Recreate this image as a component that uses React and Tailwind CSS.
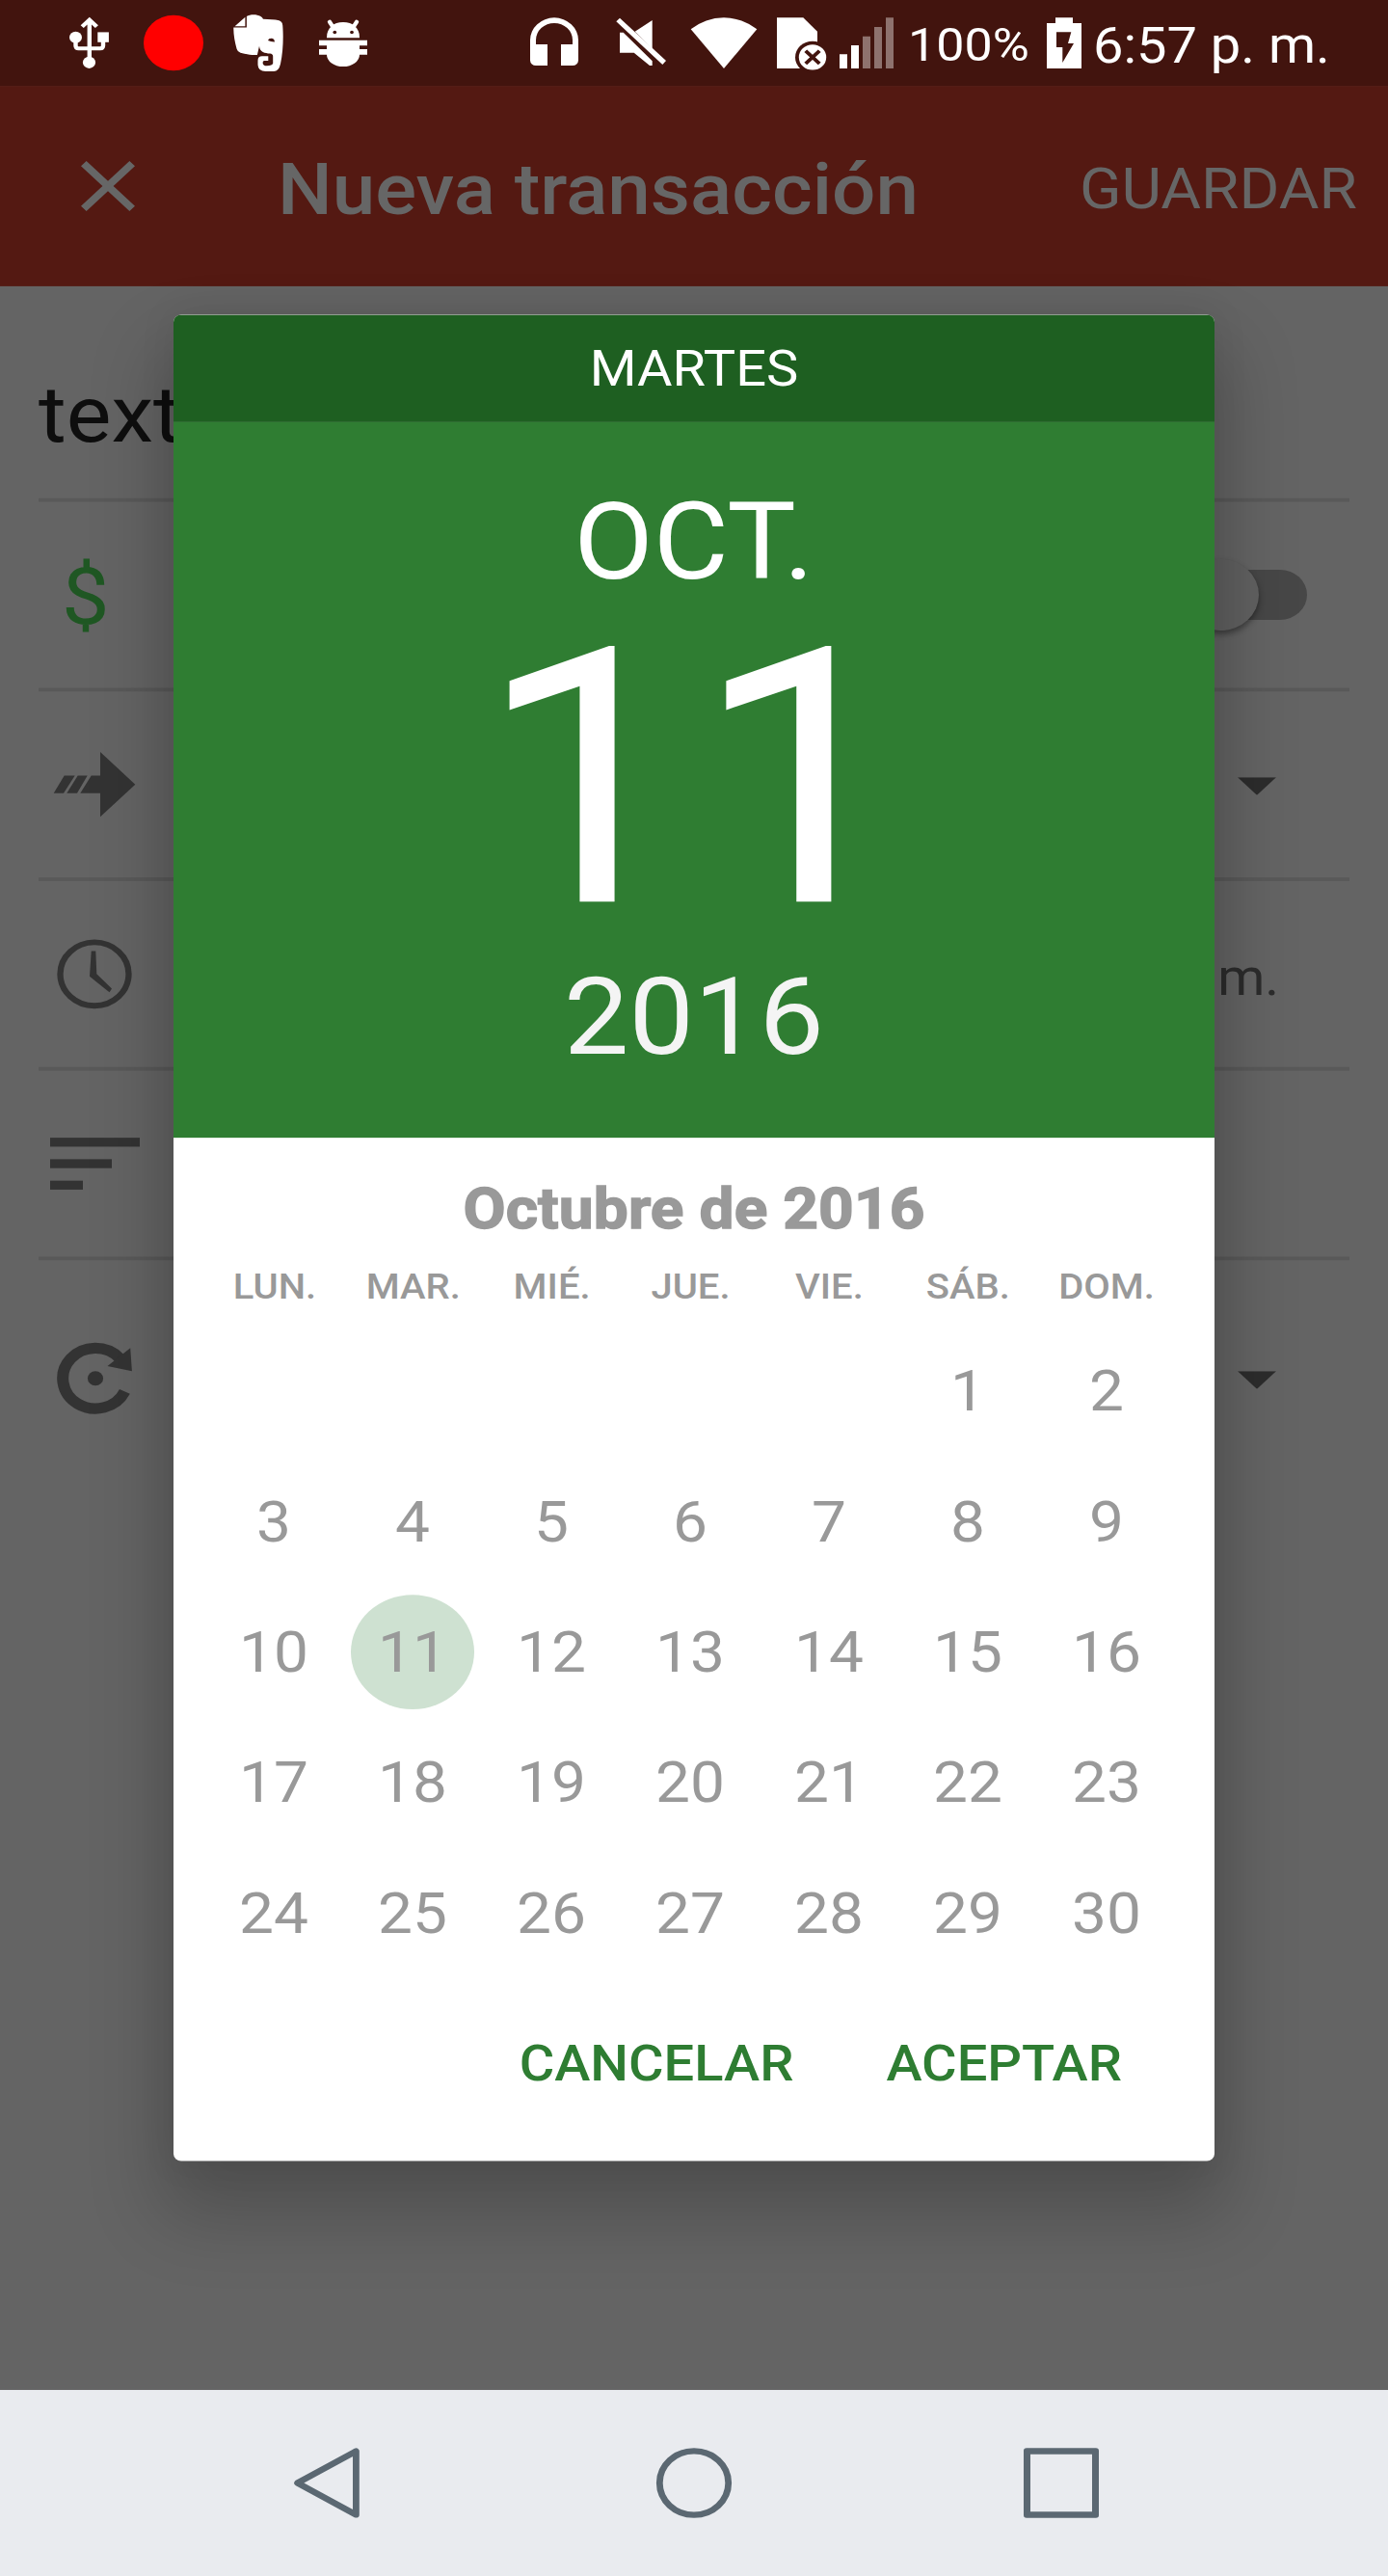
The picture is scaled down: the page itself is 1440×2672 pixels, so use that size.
import React from "react";

const WEEKDAYS = ["LUN.", "MAR.", "MIÉ.", "JUE.", "VIE.", "SÁB.", "DOM."];
const DAYS = [...Array(5).fill(null), ...Array.from({ length: 30 }, (_, i) => i + 1)];
const SELECTED_DAY = 11;

function StatusBar() {
  return (
    <header className="flex h-24 items-center bg-[#42140e] text-white">
      {/* usb */}
      <svg className="ml-[68px] h-24 w-12" viewBox="68 0 48 96" fill="none" stroke="white" strokeWidth="4.4">
        <path d="M92.8 23V66M85.2 29.8l7.6-7.6 7.6 7.6" />
        <path d="M78.5 44v7q0 3.2 3 3.2h22.5q3 0 3-3.2v-6" />
        <circle cx="78.5" cy="41.8" r="6.5" fill="white" stroke="none" />
        <path d="M101.3 36h11.6v11.2h-11.6z" fill="white" stroke="none" />
        <circle cx="92.5" cy="69.8" r="6.6" fill="white" stroke="none" />
      </svg>
      <span className="ml-[33px] size-[62px] rounded-full bg-[#ff0000]" />
      {/* notes app */}
      <svg className="ml-[29px] h-24 w-14" viewBox="240 0 56 96" fill="white">
        <path d="M243.6 29.4 254.4 19.2V29.4z" />
        <path
          fillRule="evenodd"
          d="M255.9 18.2C259 16.2 266 15.4 270.5 18.4Q272.3 19.8 273 21.4C279 22 285 21.8 289.5 23Q292.8 24 293.2 28C294.2 40 293.8 58 291 71.5Q289.3 79.8 284 79.8H275.5Q267.8 79.8 267.5 72.5V67.5Q267.5 62.8 272 62.8H278.3V68H274.2Q272.6 68 272.6 70Q272.6 73.6 277 73.6Q282.5 73.6 283.2 71V63Q283.2 60.3 280 59.9C275 59.6 269.5 58.5 269 51.5L266.9 61.4C261 62 254 60.4 249.5 58.9Q246.3 57.8 245.6 54.7C243.6 47 242.1 38 242.3 30.8H255.9zM278 45.4Q281 47 284.9 46.9Q284.8 43 281.5 42.9Q278.5 42.9 278 45.4z"
        />
      </svg>
      {/* debug bug */}
      <svg className="ml-[34px] h-24 w-[52px]" viewBox="330 0 52 96" fill="white">
        <path d="M342 24.5l4.2 7M370 24.5l-4.2 7" stroke="white" strokeWidth="4.4" strokeLinecap="round" />
        <path d="M339 42.2C339 31 346 24.9 356 24.9S373 31 373 42.2z" />
        <path d="M331 44.9h50v5.9h-8v4.2h8v6.1h-8A17 13.3 0 0 1 339 61.1h-8V55h8v-4.2h-8z" />
        <circle cx="347.3" cy="36.2" r="1.9" fill="#42140e" />
        <circle cx="365" cy="36.2" r="1.9" fill="#42140e" />
      </svg>
      {/* headset */}
      <svg className="ml-[166px] h-24 w-[56px]" viewBox="548 0 56 96" fill="white">
        <path d="M550 44.8a25 25 0 0 1 50 0v22.5a6 6 0 0 1-6 6H582V49.7h12v-4.9a19 19 0 0 0-38 0v4.9h12v23.6h-12a6 6 0 0 1-6-6z" />
      </svg>
      {/* muted speaker */}
      <svg className="ml-[34px] h-24 w-[54px]" viewBox="638 0 54 96" fill="white">
        <path d="M676.7 22.6V54.6L658.7 35.2z" />
        <path d="M643 36.3h3.7l30 32v5h-2.7l-16.3-14.4H643z" />
        <path d="M643 20.1 691 67.9 687.3 72.2 639.3 24.1z" />
      </svg>
      {/* wifi */}
      <svg className="ml-[24px] h-24 w-[70px]" viewBox="716 0 70 96" fill="white">
        <path d="M716.7 32.7A52 52 0 0 1 785.3 32.7L751 76.5z" />
      </svg>
      {/* sim with error mark */}
      <svg className="ml-[18px] h-24 w-[56px]" viewBox="804 0 56 96" fill="white">
        <path d="M806 19.8h27.3L848 35.2V76.5H806z" />
        <circle cx="843" cy="64" r="18" fill="#42140e" />
        <circle cx="843" cy="64" r="14.2" />
        <path d="M835.8 56.8l14.4 14.4M850.2 56.8l-14.4 14.4" stroke="#42140e" strokeWidth="4" />
      </svg>
      {/* signal strength */}
      <svg className="ml-[10px] h-24 w-[58px]" viewBox="870 0 58 96" fill="white">
        <path d="M871 60.7h8v15.8h-8zM883 50.7h8v25.8h-8z" />
        <path fill="#8e726e" d="M895 40.6h8v35.9h-8zM907 30.2h8v46.3h-8zM919 19.8h8v56.7h-8z" />
      </svg>
      <span className="ml-[14px] w-[144px] pt-[5px] text-[52px] leading-none">100%</span>
      {/* charging battery */}
      <svg className="h-24 w-[36px]" viewBox="1086 0 36 96">
        <path
          fill="white"
          fillRule="evenodd"
          d="M1095 19.8h18v6.1h9v50.6h-36V25.9h9zM1096 35.9v16.9h6.3V70l11.7-21.5h-6l3.3-12.6z"
        />
      </svg>
      <span className="ml-[12px] pt-[6px] text-[56px] leading-none whitespace-nowrap">6:57 p. m.</span>
    </header>
  );
}

function Toolbar() {
  return (
    <div className="flex h-56 items-center bg-[#541912] pr-8 pl-16 text-[#666]">
      <svg className="size-24" viewBox="0 0 24 24" fill="currentColor">
        <path d="M19 6.41 17.59 5 12 10.59 6.41 5 5 6.41 10.59 12 5 17.59 6.41 19 12 13.41 17.59 19 19 17.59 13.41 12z" />
      </svg>
      <h1 className="ml-32 pt-[8px] text-[80px] leading-none font-medium">Nueva transacción</h1>
      <button className="ml-auto pt-[8px] text-[64px] leading-none">GUARDAR</button>
    </div>
  );
}

function Caret() {
  return (
    <svg className="mt-[3px] ml-auto h-5 w-10 text-[#2c2c2c]" viewBox="0 0 40 20" fill="currentColor">
      <path d="M0 0h40L20 20z" />
    </svg>
  );
}

function Row({ children }) {
  return <div className="flex h-[212px] items-center border-b-4 border-[#595959]">{children}</div>;
}

function Form() {
  return (
    <main className="flex flex-col px-10 text-[#333]">
      <div className="h-[241px] border-b-4 border-[#595959] pt-[100px] text-[88px] leading-none text-[#0e0e0e]">text</div>
      <Row>
        <span className="pt-1 pl-6 text-[88px] leading-none text-[#1f5723]">$</span>
        <span className="mr-11 ml-auto flex h-14 w-[136px] items-center rounded-full bg-[#474747]">
          <span className="ml-[6px] size-20 shrink-0 rounded-full bg-[#616161] shadow-[0_4px_7px_rgba(0,0,0,0.4)]" />
        </span>
      </Row>
      <Row>
        <svg className="ml-[15px] h-[74px] w-[86px]" viewBox="55 -37 86 74" fill="currentColor">
          <path d="M104-36.3 140.3 0 104 36.3V9.9H83.3L94.7-9.9H104zM80.7-9.9h10L80 9.9H69.3zM66.7-9.9h11L66 9.9H55.7z" />
        </svg>
        <span className="mr-[76px] ml-auto flex">
          <Caret />
        </span>
      </Row>
      <Row>
        <svg className="ml-[18px] h-20 w-20" viewBox="-40 -40 80 80" fill="currentColor">
          <circle r="35.5" fill="none" stroke="currentColor" strokeWidth="6.3" />
          <path d="M-3.3-25.8h4.6L2.3-.2 18 16.3l-2.5 4.1L-5 2.7z" />
        </svg>
        <span className="mr-[73px] ml-auto pt-[7px] text-[56px] leading-none text-[#2c2c2c]">m.</span>
      </Row>
      <Row>
        <div className="ml-[12px] flex flex-col gap-[14.5px]">
          <span className="h-[9.7px] w-[92.6px] bg-[#333]" />
          <span className="h-[9.7px] w-16 bg-[#333]" />
          <span className="h-[9.7px] w-[34px] bg-[#333]" />
        </div>
      </Row>
      <div className="flex h-[264px] items-center">
        <svg className="ml-[18px] h-[82px] w-[82px]" viewBox="-41 -41 82 82" fill="currentColor">
          <path d="M30.4 14.8A33.8 33.8 0 1 1 25-22.7" fill="none" stroke="currentColor" strokeWidth="12" />
          <path d="M36.2-34 37.9-8 12.5-13.8z" />
          <circle r="8.1" />
        </svg>
        <span className="mr-[76px] ml-auto flex">
          <Caret />
        </span>
      </div>
    </main>
  );
}

function DatePicker() {
  return (
    <section className="absolute top-[352px] left-[180px] flex h-[2064px] w-[1080px] flex-col overflow-hidden rounded-lg bg-white">
      <div className="flex h-[120px] items-center justify-center bg-[#1e5f21] text-[56px] leading-none text-white">
        MARTES
      </div>
      <div className="flex h-[800px] flex-col items-center bg-[#2f7d32] text-white">
        <span className="mt-[74px] text-[120px] leading-none">OCT.</span>
        <span className="mt-[6px] text-[400px] leading-none">11</span>
        <span className="mt-[5px] text-[120px] leading-none text-[#f4f4f4]">2016</span>
      </div>
      <div className="flex flex-col pr-10 pl-8 text-[#999]">
        <h2 className="mt-[48px] self-center pl-2 text-[64px] leading-none font-bold tracking-[0.1px] [-webkit-text-stroke:1.5px_#999]">
          Octubre de 2016
        </h2>
        <div className="mt-[35px] grid grid-cols-7 pl-px">
          {WEEKDAYS.map((d) => (
            <span key={d} className="text-center text-[40px] leading-none font-medium">
              {d}
            </span>
          ))}
        </div>
        <div className="mt-[23px] grid grid-cols-7">
          {DAYS.map((d, i) => (
            <span key={i} className="flex h-[146px] items-center justify-center text-[64px] leading-none">
              {d === SELECTED_DAY ? (
                <span className="flex size-32 items-center justify-center rounded-full bg-[#cee1d1] pt-[2px]">{d}</span>
              ) : (
                <span className="pt-[2px]">{d}</span>
              )}
            </span>
          ))}
        </div>
      </div>
      <div className="mt-[67px] mr-24 flex justify-end gap-24 text-[56px] leading-none font-medium text-[#2e7d32]">
        <button>CANCELAR</button>
        <button>ACEPTAR</button>
      </div>
    </section>
  );
}

function NavBar() {
  return (
    <nav className="mt-auto flex h-[208px] items-center bg-[#e9ebef] pl-[302px] text-[#5b6872]">
      <svg className="h-20 w-[72px]" viewBox="0 0 72 80" fill="none" stroke="currentColor" strokeWidth="6.8" strokeLinejoin="round">
        <path d="M6.6 40 67.4 4.5V75.5z" />
      </svg>
      <svg className="ml-[306px] size-20" viewBox="0 0 80 80" fill="none" stroke="currentColor" strokeWidth="6.8">
        <circle cx="40" cy="40" r="35.7" />
      </svg>
      <span className="ml-[302px] size-[78px] rounded-[3px] border-[7px] border-[#5b6872]" />
    </nav>
  );
}

export default function App() {
  return (
    <div className="h-[2672px] w-[1440px] overflow-hidden">
      {/* a 1440x2880 phone screen, compressed vertically to the window */}
      <div className="relative flex h-[2880px] w-[1440px] origin-top-left scale-y-[0.927778] flex-col bg-[#646464] font-[Roboto,sans-serif]">
        <StatusBar />
        <Toolbar />
        <Form />
        <div className="absolute top-[352px] left-[180px] h-[2064px] w-[1080px] rounded-lg shadow-[0_48px_80px_14px_rgba(0,0,0,0.2),0_0_40px_rgba(0,0,0,0.08)]" />
        <DatePicker />
        <NavBar />
      </div>
    </div>
  );
}
